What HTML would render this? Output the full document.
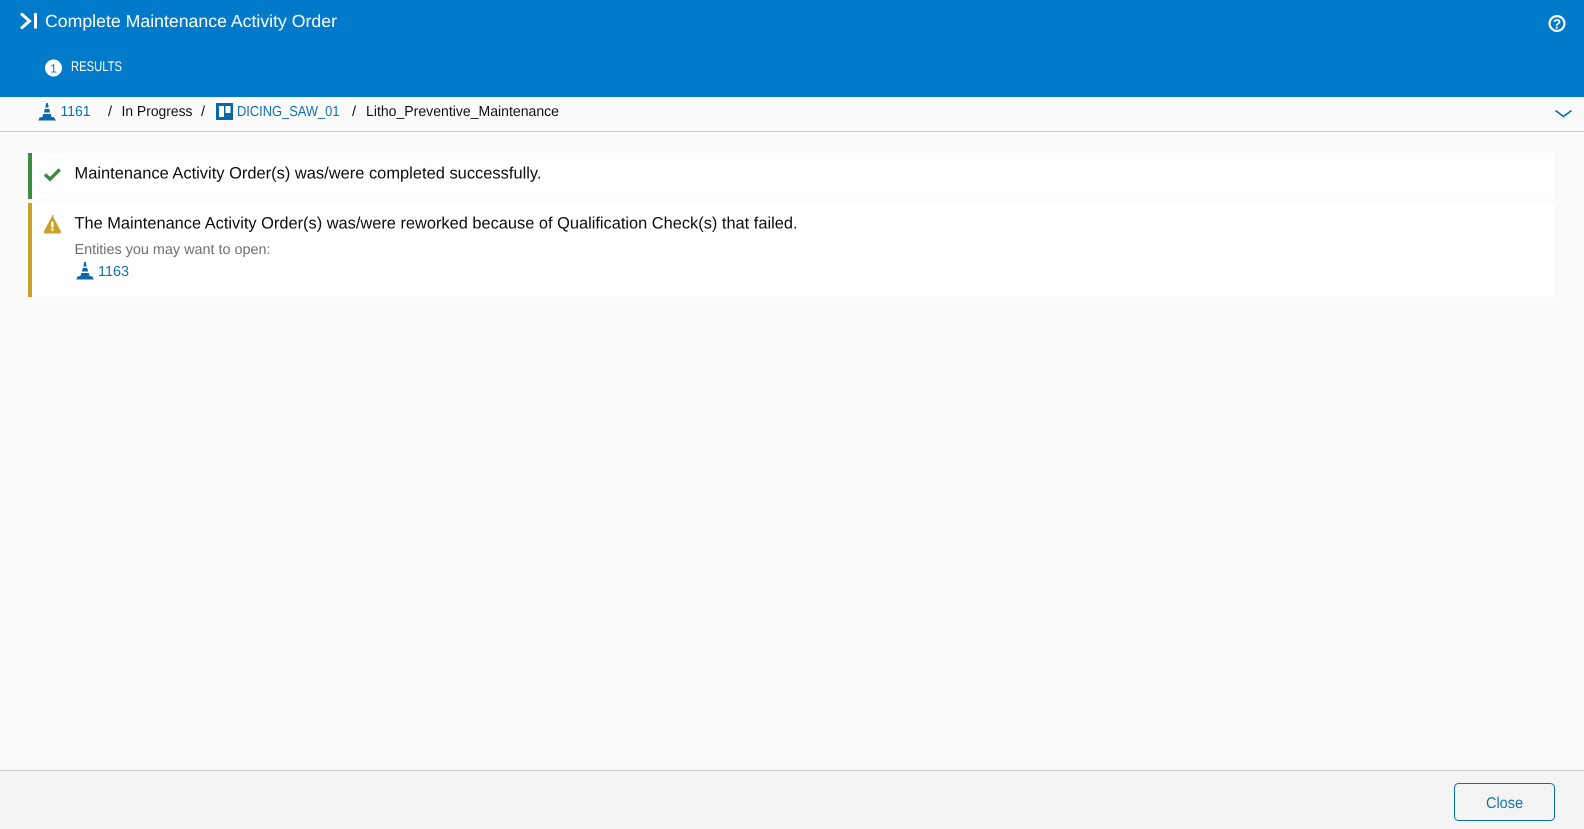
<!DOCTYPE html>
<html><head><meta charset="utf-8"><title>Complete Maintenance Activity Order</title>
<style>
html,body{margin:0;padding:0;width:1584px;height:829px;overflow:hidden;background:#fafafa}
svg{display:block;position:absolute;left:0;top:0}
text{font-family:"Liberation Sans",sans-serif;text-rendering:geometricPrecision}
</style></head><body>
<svg width="1584" height="829" viewBox="0 0 1584 829" xmlns="http://www.w3.org/2000/svg">
<rect width="1584" height="829" fill="#fafafa"/>
<rect width="1584" height="97" fill="#007ac9"/>
<path d="M21 13.500l8.500 7.500-8.500 7.500" fill="none" stroke="#fff" stroke-width="3"/>
<rect x="34" y="13" width="3" height="15.500" fill="#fff"/>
<text x="45" y="27" font-size="17.500" fill="#fff" textLength="292" lengthAdjust="spacingAndGlyphs">Complete Maintenance Activity Order</text>
<circle cx="53.500" cy="68" r="8.500" fill="#fff"/>
<text x="53.500" y="72.500" font-size="12" fill="#007ac9" text-anchor="middle">1</text>
<text x="71" y="71" font-size="14" fill="#fff" textLength="51" lengthAdjust="spacingAndGlyphs">RESULTS</text>
<circle cx="1557" cy="23.500" r="7.400" fill="none" stroke="#fff" stroke-width="2.200"/>
<text x="1557" y="28.500" font-size="13.500" font-weight="bold" fill="#fff" text-anchor="middle">?</text>

<rect y="131" width="1584" height="1" fill="#c8c8c8"/>
<path d="M38.200 120.500l1.600-3.300h2.500l1-3.200h7.400l1 3.200h2.500l1.600 3.300z M43.900 112.500l.9-3.500h4.400l.9 3.500z M45.300 107.500l.9-4.500h1.600l.9 4.500z" fill="#0a68a8"/>
<text x="60.500" y="116" font-size="14.500" fill="#1272b0" textLength="30" lengthAdjust="spacingAndGlyphs">1161</text>
<text x="108" y="116" font-size="14.500" fill="#111">/</text>
<text x="121.500" y="116" font-size="14.500" fill="#111" textLength="71" lengthAdjust="spacingAndGlyphs">In Progress</text>
<text x="201" y="116" font-size="14.500" fill="#111">/</text>
<rect x="216" y="103" width="17" height="17" fill="#0a68a8"/>
<rect x="219" y="106" width="5" height="11" fill="#fff"/>
<rect x="225.500" y="106" width="5" height="7" fill="#fff"/>
<text x="237" y="116" font-size="14.500" fill="#1272b0" textLength="102.500" lengthAdjust="spacingAndGlyphs">DICING_SAW_01</text>
<text x="352" y="116" font-size="14.500" fill="#111">/</text>
<text x="366" y="116" font-size="14.500" fill="#111" textLength="193" lengthAdjust="spacingAndGlyphs">Litho_Preventive_Maintenance</text>
<path d="M1555.500 110.500l8 6 8-6" fill="none" stroke="#0a68a8" stroke-width="1.600"/>

<rect x="28" y="153" width="1527" height="46" fill="#fff"/>
<rect x="28" y="153" width="4" height="46" fill="#3c8c40"/>
<path d="M45 174.500l5 4.700 9.800-9.800" fill="none" stroke="#3c8c40" stroke-width="3.400"/>
<text x="74.500" y="178.500" font-size="16.500" fill="#0c0c14" textLength="467" lengthAdjust="spacingAndGlyphs">Maintenance Activity Order(s) was/were completed successfully.</text>

<rect x="28" y="203" width="1527" height="94" fill="#fff"/>
<rect x="28" y="203" width="4" height="94" fill="#c9a02a"/>
<path d="M52.400 216.500l8 15q.4 1.500-1.300 1.500h-13.400q-1.700 0-1.300-1.500l8-15q.6-1 1-.9z" fill="#c9a02a" stroke="#c9a02a"/>
<rect x="51.200" y="221.500" width="2.400" height="6" fill="#fff"/>
<rect x="51.200" y="228.500" width="2.400" height="2.200" fill="#fff"/>
<text x="74.500" y="228.500" font-size="16.500" fill="#0c0c14" textLength="723" lengthAdjust="spacingAndGlyphs">The Maintenance Activity Order(s) was/were reworked because of Qualification Check(s) that failed.</text>
<text x="74.500" y="254" font-size="14.500" fill="#6e6e72" textLength="196" lengthAdjust="spacingAndGlyphs">Entities you may want to open:</text>
<path d="M76.200 279.500l1.600-3.300h2.500l1-3.200h7.400l1 3.200h2.500l1.600 3.300z M81.900 271.500l.9-3.500h4.400l.9 3.500z M83.300 266.500l.9-4.500h1.600l.9 4.500z" fill="#0a68a8"/>
<text x="98" y="276" font-size="14.500" fill="#1272b0" textLength="31" lengthAdjust="spacingAndGlyphs">1163</text>

<rect y="770" width="1584" height="59" fill="#f4f4f4"/>
<rect y="770" width="1584" height="1" fill="#c8c8c8"/>
<rect x="1454.500" y="783.500" width="100" height="37" rx="4" fill="#f4f4f4" stroke="#0a6eae" stroke-width="1"/>
<text x="1486" y="808" font-size="15.500" fill="#1272b0" textLength="37" lengthAdjust="spacingAndGlyphs">Close</text>
</svg>
</body></html>
